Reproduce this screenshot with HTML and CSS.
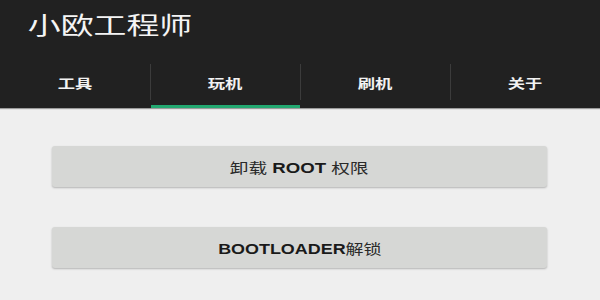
FILE: index.html
```html
<!DOCTYPE html>
<html lang="zh-CN">
<head>
    <meta charset="UTF-8">
    <meta name="viewport" content="width=device-width, initial-scale=1.0">
    <title>小欧工程师</title>
    <link rel="stylesheet" href="styles.css">
</head>
<body>
    <header class="app-header">
        <div class="app-title"><span class="wide">小欧工程师</span></div>
        <nav class="tabs">
            <div class="tab">
                <div class="tab-label"><span class="wide">工具</span></div>
                <div class="tab-bar"></div>
            </div>
            <div class="tab active">
                <div class="tab-label"><span class="wide">玩机</span></div>
                <div class="tab-bar"></div>
            </div>
            <div class="tab">
                <div class="tab-label"><span class="wide">刷机</span></div>
                <div class="tab-bar"></div>
            </div>
            <div class="tab">
                <div class="tab-label"><span class="wide">关于</span></div>
                <div class="tab-bar"></div>
            </div>
        </nav>
    </header>

    <main class="content">
        <button class="action-btn"><span class="wide">卸载 <b>ROOT</b> 权限</span></button>
        <button class="action-btn"><span class="wide narrow"><b>BOOTLOADER</b>解锁</span></button>
    </main>
</body>
</html>
```

FILE: styles.css
```css
* {
    margin: 0;
    padding: 0;
    box-sizing: border-box;
}

body {
    font-family: "Liberation Sans", "Noto Sans CJK SC", sans-serif;
    background: #efefef;
    width: 600px;
    height: 300px;
    overflow: hidden;
    color: #222;
}

/* screenshot is stretched horizontally */
.wide {
    display: inline-block;
    transform: scaleX(1.33);
    white-space: nowrap;
}

.wide.narrow {
    transform: scaleX(1.28);
}

.app-header {
    background: #212121;
    height: 108px;
    box-shadow: 0 1px 1px rgba(0,0,0,0.35);
    display: flex;
    flex-direction: column;
}

.app-title {
    height: 62px;
    display: flex;
    align-items: center;
    padding-left: 50px;
    padding-bottom: 16px;
    color: #f4f4f4;
    font-size: 24px;
    font-weight: 400;
}

.app-title .wide {
    transform: scaleX(1.37);
}

.tabs {
    flex: 1;
    display: flex;
}

.tab {
    flex: 1;
    display: flex;
    flex-direction: column;
}

.tab-label {
    height: 36px;
    margin: 2px 0 5px;
    display: flex;
    align-items: center;
    justify-content: center;
    color: #f2f2f2;
    font-size: 13px;
    font-weight: bold;
    border-left: 1px solid #3c3c3c;
}

.tab:first-child .tab-label {
    border-left: none;
}

.tab-bar {
    height: 3px;
}

.tab.active .tab-bar {
    background: #22a870;
    margin-left: 1px;
}

.content {
    display: flex;
    flex-direction: column;
    gap: 40px;
    padding: 38px 53px 0 52px;
}

.action-btn {
    height: 41px;
    border: none;
    border-radius: 3px;
    background: #d6d7d5;
    box-shadow: 0 1px 2px rgba(0,0,0,0.25);
    font-family: inherit;
    font-size: 14px;
    color: #2a2a2a;
    cursor: pointer;
}

.action-btn b {
    color: #1a1a1a;
}
```
